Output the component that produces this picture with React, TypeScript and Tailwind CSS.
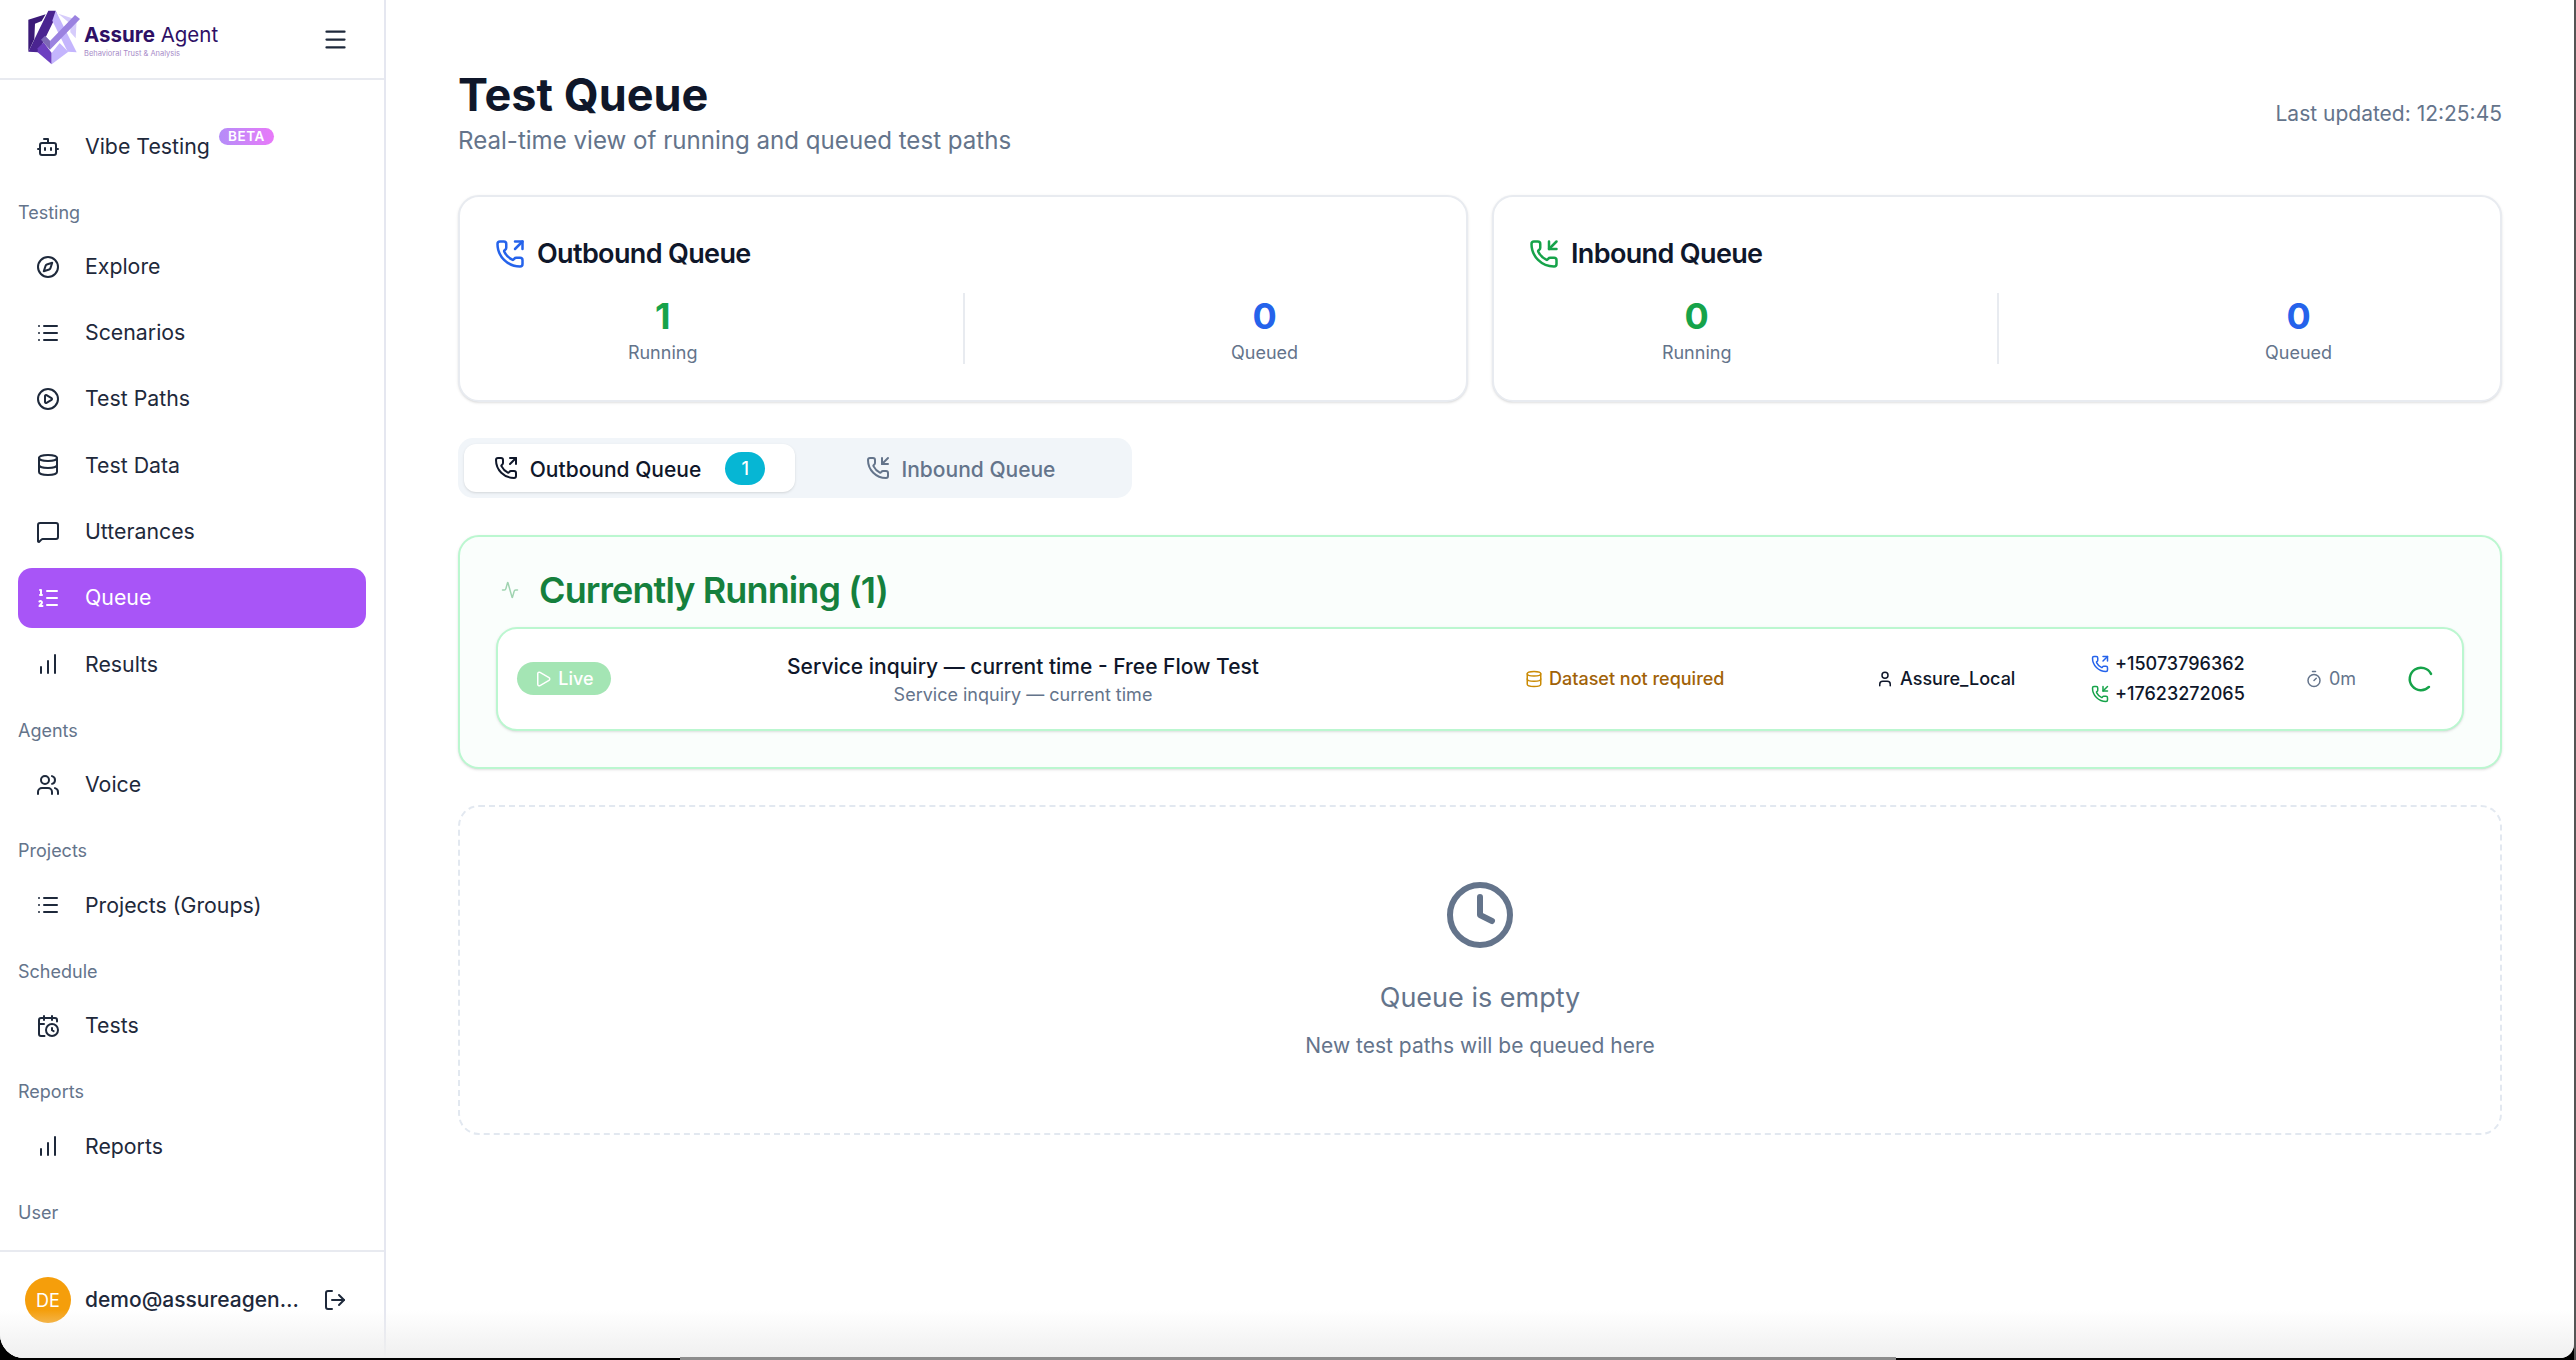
import React from "react";
import {
  Activity,
  BarChart,
  Bot,
  CalendarClock,
  CirclePlay,
  Clock,
  Compass,
  Database,
  List,
  ListOrdered,
  LoaderCircle,
  LogOut,
  Menu,
  MessageSquare,
  PhoneIncoming,
  PhoneOutgoing,
  Play,
  Timer,
  User,
  Users,
} from "lucide-react";

interface NavItem {
  label: string;
  icon: React.ElementType;
  active?: boolean;
  beta?: boolean;
}

interface NavGroup {
  title?: string;
  items: NavItem[];
}

const groups: NavGroup[] = [
  { items: [{ label: "Vibe Testing", icon: Bot, beta: true }] },
  {
    title: "Testing",
    items: [
      { label: "Explore", icon: Compass },
      { label: "Scenarios", icon: List },
      { label: "Test Paths", icon: CirclePlay },
      { label: "Test Data", icon: Database },
      { label: "Utterances", icon: MessageSquare },
      { label: "Queue", icon: ListOrdered, active: true },
      { label: "Results", icon: BarChart },
    ],
  },
  { title: "Agents", items: [{ label: "Voice", icon: Users }] },
  { title: "Projects", items: [{ label: "Projects (Groups)", icon: List }] },
  { title: "Schedule", items: [{ label: "Tests", icon: CalendarClock }] },
  { title: "Reports", items: [{ label: "Reports", icon: BarChart }] },
  { title: "User", items: [] },
];

const Logo = () => (
  <div className="flex items-center">
    <svg width="62" height="60" viewBox="0 0 186 180" className="shrink-0 ml-[25px]">
      {/* left shield */}
      <polygon points="10,32 62,16 50,36 30,44 28,90 10,128" fill="#3b1a78" />
      {/* A left leg */}
      <polygon points="70,5 92,5 100,28 84,40 40,130 10,128" fill="#4a2490" />
      {/* right shield */}
      <polygon points="100,14 155,32 152,88 136,70 136,44" fill="#d6ccfb" />
      {/* A right leg */}
      <polygon points="92,5 155,130 128,128 82,35" fill="#c4b5fd" />
      {/* lower shield */}
      <polygon points="38,118 56,100 80,132 80,166 38,130" fill="#6d3fc0" />
      <polygon points="80,132 104,102 130,128 80,166" fill="#c4b5fd" />
      {/* check */}
      <polygon points="60,80 75,96 150,18 165,30 75,122" fill="#9b82e0" />
      <polygon points="48,92 60,80 75,96 75,122" fill="#7d68b5" />
    </svg>
    <div className="ml-[-3px] mt-[3px] flex flex-col text-[#2e1065]">
      <div className="text-[20.5px] leading-[26px] whitespace-nowrap">
        <span className="font-bold">Assure</span> Agent
      </div>
      <div className="text-[7.5px] leading-[12px] text-[#a78bc8] whitespace-nowrap">
        Behavioral Trust &amp; Analysis
      </div>
    </div>
  </div>
);

const Sidebar = () => (
  <aside className="w-[386px] h-full shrink-0 flex flex-col bg-white border-r-2 border-[#e5e7f0]">
    <div className="h-[80px] shrink-0 flex items-center justify-between border-b-2 border-[#e8eaf0] pr-[35px]">
      <Logo />
      <Menu size={27} className="text-[#1e293b]" />
    </div>
    <nav className="flex-1 px-[18px] pt-[37px]">
      {groups.map((group, i) => (
        <div key={i}>
          {group.title && (
            <div
              className={`mb-[11px] h-[27px] text-[18px] leading-[27px] text-[#64748b] ${
                i === 1 ? "mt-[21.5px]" : "mt-[22.5px]"
              }`}
            >
              {group.title}
            </div>
          )}
          <div className="flex flex-col gap-[6.33px]">
            {group.items.map((item) => {
              const NavIcon = item.icon;
              return (
                <div
                  key={item.label}
                  className={`h-[60px] flex items-center gap-[25px] pl-[18px] rounded-[14px] text-[21.3px] ${
                    item.active ? "bg-[#a855f7] text-white" : "text-[#1e293b]"
                  }`}
                >
                  <NavIcon size={24} />
                  <span className="relative">
                    {item.label}
                    {item.beta && (
                      <span className="absolute left-[134px] top-[-3px] h-[17px] w-[55px] flex items-center justify-center rounded-full bg-gradient-to-r from-[#b48cf8] to-[#e879f9] text-[13.5px] font-semibold tracking-[0.6px] text-white">
                        BETA
                      </span>
                    )}
                  </span>
                </div>
              );
            })}
          </div>
        </div>
      ))}
    </nav>
    <div className="h-[108px] shrink-0 flex items-center border-t-2 border-[#e8eaf0] pl-[25px] pr-[37px] pb-[10px]">
      <div className="w-[46px] h-[46px] shrink-0 rounded-full bg-[#f59e0b] flex items-center justify-center text-[18px] text-white">
        DE
      </div>
      <span className="ml-[14px] w-[216px] truncate text-[21px] font-medium text-[#1e293b]">
        demo@assureagent.ai
      </span>
      <LogOut size={24} className="ml-auto text-[#1e293b]" />
    </div>
  </aside>
);

const StatCard = ({
  title,
  icon: CardIcon,
  iconClass,
  running,
  queued,
}: {
  title: string;
  icon: React.ElementType;
  iconClass: string;
  running: number;
  queued: number;
}) => (
  <div className="flex-1 h-[207px] rounded-[21px] border-2 border-[#e8ebf0] bg-white px-[35px] pt-[34px] shadow-sm">
    <div className="h-[44px] pt-[2px] flex items-center gap-[12px] text-[27px] leading-[40px] font-semibold tracking-[-0.65px] text-[#0f172a]">
      <CardIcon size={30} className={iconClass} />
      {title}
    </div>
    <div className="mt-[18px] flex justify-around">
      <div className="flex flex-col items-center">
        <span className="text-[36px] leading-[46px] font-bold text-[#16a34a]">{running}</span>
        <span className="text-[18px] leading-[27px] text-[#64748b]">Running</span>
      </div>
      <div className="w-[2px] h-[71px] bg-[#e8ebf0]" />
      <div className="flex flex-col items-center">
        <span className="text-[36px] leading-[46px] font-bold text-[#2563eb]">{queued}</span>
        <span className="text-[18px] leading-[27px] text-[#64748b]">Queued</span>
      </div>
    </div>
  </div>
);

const Tabs = () => (
  <div className="mb-[36.5px] w-[674px] h-[60px] rounded-[15px] bg-[#f1f5f9] p-[6px] grid grid-cols-2">
    <div className="rounded-[12px] bg-white shadow-sm flex items-center justify-center text-[21px] font-medium text-[#0f172a]">
      <PhoneOutgoing size={24} className="mr-[12px]" />
      <span className="pt-[3px]">Outbound Queue</span>
      <span className="ml-[24px] w-[40px] h-[33px] rounded-full bg-[#06b6d4] flex items-center justify-center text-[18px] text-white">
        1
      </span>
    </div>
    <div className="flex items-center justify-center text-[21px] font-medium text-[#64748b]">
      <PhoneIncoming size={24} className="mr-[12px]" />
      <span className="pt-[3px]">Inbound Queue</span>
    </div>
  </div>
);

const RunningRow = () => (
  <div className="h-[104px] rounded-[21px] border-2 border-[#bbf7d0] bg-white shadow-sm flex items-center pl-[19px] pr-[26px]">
    <div className="w-[94px] h-[33px] shrink-0 rounded-full bg-[#a4e5b4] flex items-center justify-center gap-[6px] text-[18px] font-medium text-white">
      <Play size={18} />
      Live
    </div>
    <div className="flex-1 pr-[90px] pt-[2px] flex flex-col items-center">
      <span className="text-[21px] leading-[30px] font-medium text-[#0f172a]">
        Service inquiry — current time - Free Flow Test
      </span>
      <span className="text-[18px] leading-[26px] text-[#64748b]">Service inquiry — current time</span>
    </div>
    <div className="w-[351px] shrink-0 flex items-center gap-[6px] text-[18px] font-medium text-[#a16207]">
      <Database size={18} className="text-[#ca8a04]" />
      Dataset not required
    </div>
    <div className="w-[215px] shrink-0 flex items-center gap-[6px] text-[18px] font-medium text-[#0f172a]">
      <User size={18} />
      Assure_Local
    </div>
    <div className="w-[214px] shrink-0 flex flex-col gap-[6px] text-[18px] leading-[24px] font-medium text-[#0f172a]">
      <div className="flex items-center gap-[6px]">
        <PhoneOutgoing size={18} className="text-[#2563eb]" />
        +15073796362
      </div>
      <div className="flex items-center gap-[6px]">
        <PhoneIncoming size={18} className="text-[#16a34a]" />
        +17623272065
      </div>
    </div>
    <div className="w-[101px] shrink-0 flex items-center gap-[6px] text-[18px] text-[#64748b]">
      <Timer size={18} />
      0m
    </div>
    <LoaderCircle size={30} strokeWidth={2} className="shrink-0 rotate-[45deg] text-[#16a34a]" />
  </div>
);

const App = () => (
  <div className="relative w-[2576px] h-[1360px] bg-black overflow-hidden font-['Inter',sans-serif]">
    <div className="relative w-[2574px] h-[1358px] flex bg-white overflow-hidden rounded-bl-[24px] rounded-br-[14px]">
      <Sidebar />
      <main className="flex-1 pl-[72px] pr-[72px] pt-[68px]">
        <div className="flex justify-between mb-[36px]">
          <div>
            <h1 className="text-[45px] leading-[54px] font-bold text-[#0f172a]">Test Queue</h1>
            <p className="mt-[1px] text-[24.1px] leading-[36px] text-[#64748b]">
              Real-time view of running and queued test paths
            </p>
          </div>
          <span className="mt-[30px] text-[21px] leading-[32px] text-[#64748b]">Last updated: 12:25:45</span>
        </div>

        <div className="flex gap-[24px] mb-[36px]">
          <StatCard title="Outbound Queue" icon={PhoneOutgoing} iconClass="text-[#2563eb]" running={1} queued={0} />
          <StatCard title="Inbound Queue" icon={PhoneIncoming} iconClass="text-[#16a34a]" running={0} queued={0} />
        </div>

        <Tabs />

        <section className="mb-[36px] h-[234px] rounded-[21px] border-2 border-[#bbf7d0] bg-[#fafefc] px-[36px] pt-[26px] shadow-sm">
          <div className="h-[54px] mb-[10px] flex items-center">
            <Activity size={18} className="ml-[5px] mr-[20px] text-[#9fd3b0]" />
            <h2 className="text-[36px] leading-[54px] font-semibold tracking-[-0.9px] text-[#15803d]">
              Currently Running (1)
            </h2>
          </div>
          <RunningRow />
        </section>

        <section className="rounded-[21px] border-2 border-dashed border-[#e2e8f0] pt-[72px] pb-[71px] flex flex-col items-center text-[#64748b]">
          <Clock size={72} />
          <div className="mt-[27px] text-[27px] leading-[40px]">Queue is empty</div>
          <div className="mt-[12px] text-[21px] leading-[32px]">New test paths will be queued here</div>
        </section>
      </main>
      {/* window edge shading */}
      <div className="pointer-events-none absolute inset-x-0 bottom-0 h-[48px] bg-gradient-to-b from-transparent to-[#efefef]" />
    </div>
    <div className="absolute right-0 top-0 w-[2px] h-full bg-[#555555]" />
    <div className="absolute bottom-0 left-[680px] w-[1216px] h-[3px] bg-[#8c8c8c]" />
  </div>
);

export default App;
